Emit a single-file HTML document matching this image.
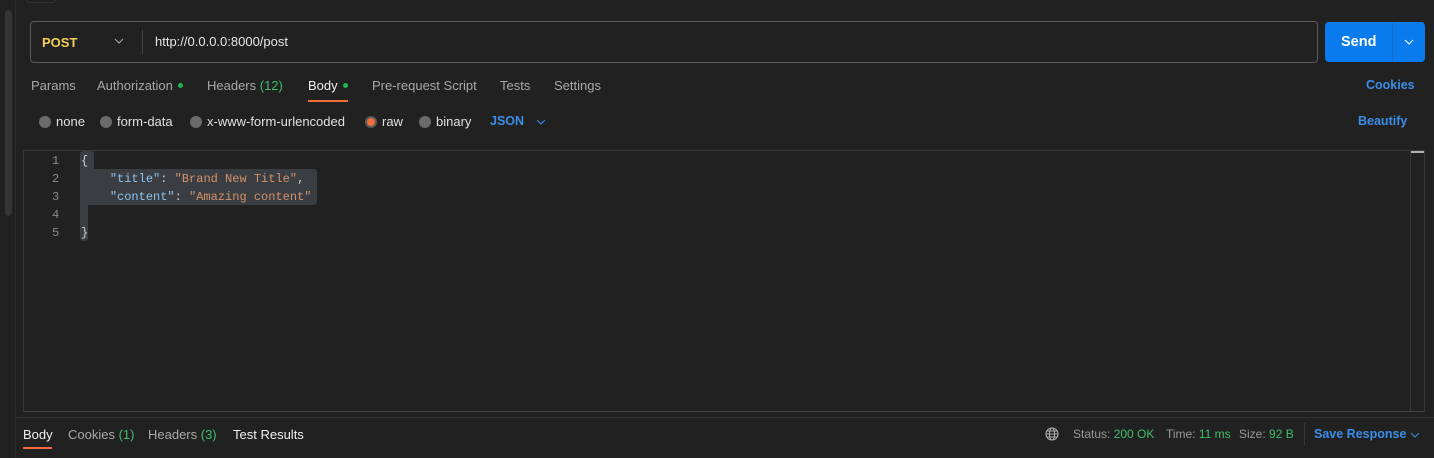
<!DOCTYPE html>
<html><head><style>
*{box-sizing:border-box;margin:0;padding:0}
body{width:1434px;height:458px;background:#212121;font-family:"Liberation Sans",sans-serif;font-size:13px;color:#c8c8c8;position:relative;overflow:hidden}
.a{position:absolute;white-space:nowrap}
.mono{font-family:"Liberation Mono",monospace;font-size:12px}
.g{color:#3dbf6a}
.b{color:#3b8ee8;font-weight:bold}
.dot{display:inline-block;width:5px;height:5px;border-radius:50%;background:#1fb84f;margin-left:5px;vertical-align:2px}
.r{position:absolute;width:12px;height:12px;border-radius:50%;background:#6b6b6b;top:116px}
.sel{position:absolute;background:#3a3d42}
</style></head><body>
<div class="a" style="left:5px;top:10px;width:7px;height:206px;background:#353535;border-radius:4px"></div>
<div class="a" style="left:15px;top:0;width:1px;height:458px;background:#2c2c2c"></div>
<div class="a" style="left:26px;top:0;width:30px;height:3px;border:1px solid #333;border-top:none;border-radius:0 0 4px 4px"></div>
<div class="a" style="left:30px;top:21px;width:1288px;height:42px;border:1px solid #5a5a5a;border-radius:4px"></div>
<div class="a" style="left:42px;top:35px;color:#f4d05a;font-weight:bold;font-size:13px">POST</div>
<svg class="a" style="left:114px;top:38px" width="10" height="7"><path d="M1 1l4 4 4-4" stroke="#aaa" fill="none"/></svg>
<div class="a" style="left:142px;top:30px;width:1px;height:24px;background:#444"></div>
<div class="a" style="left:155px;top:34px;color:#e6e6e6">http://0.0.0.0:8000/post</div>
<div class="a" style="left:1325px;top:22px;width:100px;height:40px;background:#097bed;border-radius:4px"></div>
<div class="a" style="left:1392px;top:22px;width:1px;height:40px;background:#1a6cc6"></div>
<div class="a" style="left:1341px;top:34px;color:#fff;font-weight:bold;font-size:14.5px">Send</div>
<svg class="a" style="left:1404px;top:39px" width="10" height="7"><path d="M1 1l4 4 4-4" stroke="#fff" fill="none"/></svg>
<div class="a" style="left:31px;top:78px;color:#a8a8a8">Params</div>
<div class="a" style="left:97px;top:78px;color:#a8a8a8">Authorization<span class="dot"></span></div>
<div class="a" style="left:207px;top:78px;color:#a8a8a8">Headers <span class="g">(12)</span></div>
<div class="a" style="left:308px;top:78px;color:#f0f0f0">Body<span class="dot"></span></div>
<div class="a" style="left:308px;top:100px;width:40px;height:2px;background:#f26b3a"></div>
<div class="a" style="left:372px;top:78px;color:#a8a8a8">Pre-request Script</div>
<div class="a" style="left:500px;top:78px;color:#a8a8a8">Tests</div>
<div class="a" style="left:554px;top:78px;color:#a8a8a8">Settings</div>
<div class="a b" style="left:1366px;top:78px;font-size:12.5px">Cookies</div>
<div class="r" style="left:39px"></div><div class="a" style="left:56px;top:114px;color:#e0e0e0">none</div>
<div class="r" style="left:100px"></div><div class="a" style="left:117px;top:114px;color:#e0e0e0">form-data</div>
<div class="r" style="left:190px"></div><div class="a" style="left:207px;top:114px;color:#e0e0e0">x-www-form-urlencoded</div>
<div class="r" style="left:365px;background:#5a5a5a"><div style="position:absolute;left:2px;top:2px;width:8px;height:8px;border-radius:50%;background:#f26b3a"></div></div><div class="a" style="left:382px;top:114px;color:#e0e0e0">raw</div>
<div class="r" style="left:419px"></div><div class="a" style="left:436px;top:114px;color:#e0e0e0">binary</div>
<div class="a b" style="left:490px;top:114px;font-size:12.5px">JSON</div>
<svg class="a" style="left:536px;top:119px" width="10" height="7"><path d="M1 1l4 4 4-4" stroke="#3b8ee8" fill="none"/></svg>
<div class="a b" style="left:1358px;top:114px;font-size:12.5px">Beautify</div>
<div class="a" style="left:23px;top:150px;width:1402px;height:262px;border:1px solid #383838;border-bottom-color:#444"></div>
<div class="a" style="left:1410px;top:151px;width:14px;height:260px;border-left:1px solid #383838"></div>
<div class="a" style="left:1411px;top:151px;width:13px;height:2px;background:#b0b0b0"></div>
<div class="sel" style="left:80px;top:151px;width:14px;height:18px;border-radius:3px 3px 0 0"></div>
<div class="sel" style="left:80px;top:169px;width:237px;height:36px;border-radius:0 3px 3px 0"></div>
<div class="sel" style="left:80px;top:205px;width:8px;height:36px;border-radius:0 0 3px 3px"></div>
<div class="a mono" style="left:52px;top:152px;line-height:18px;color:#8a8a8a">1<br>2<br>3<br>4<br>5</div>
<div class="a mono" style="left:81px;top:152px;line-height:18px;color:#d0d0d0;white-space:pre">{
    <span style="color:#8cc4f0">"title"</span>: <span style="color:#d4926a">"Brand New Title"</span>,
    <span style="color:#8cc4f0">"content"</span>: <span style="color:#d4926a">"Amazing content"</span>

}</div>
<div class="a" style="left:16px;top:417px;width:1418px;height:1px;background:#333"></div>
<div class="a" style="left:23px;top:427px;color:#f0f0f0">Body</div>
<div class="a" style="left:23px;top:447px;width:29px;height:2px;background:#f26b3a"></div>
<div class="a" style="left:68px;top:427px;color:#a8a8a8">Cookies <span class="g">(1)</span></div>
<div class="a" style="left:148px;top:427px;color:#a8a8a8">Headers <span class="g">(3)</span></div>
<div class="a" style="left:233px;top:427px;color:#f0f0f0">Test Results</div>
<svg class="a" style="left:1045px;top:427px" width="14" height="14" fill="none" stroke="#aaa" stroke-width="1.1"><circle cx="7" cy="7" r="6"/><ellipse cx="7" cy="7" rx="2.6" ry="6"/><path d="M1 7h12M2 4h10M2 10h10"/></svg>
<div class="a" style="left:1073px;top:427px;font-size:12px;color:#9a9a9a">Status: <span class="g">200 OK</span></div>
<div class="a" style="left:1166px;top:427px;font-size:12px;color:#9a9a9a">Time: <span class="g">11 ms</span></div>
<div class="a" style="left:1239px;top:427px;font-size:12px;color:#9a9a9a">Size: <span class="g">92 B</span></div>
<div class="a" style="left:1304px;top:423px;width:1px;height:22px;background:#3a3a3a"></div>
<div class="a b" style="left:1314px;top:427px;font-size:12.5px">Save Response</div>
<svg class="a" style="left:1410px;top:432px" width="10" height="7"><path d="M1 1l4 4 4-4" stroke="#3b8ee8" fill="none"/></svg>
</body></html>
